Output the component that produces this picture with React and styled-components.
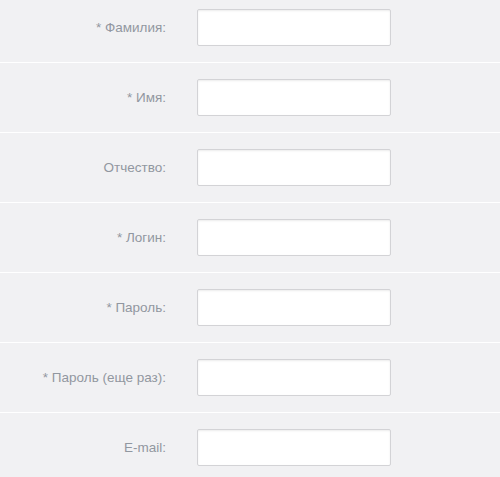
import React from 'react';
import styled, { createGlobalStyle } from 'styled-components';

const GlobalStyle = createGlobalStyle`
  html, body {
    margin: 0;
    padding: 0;
    background: #f1f1f3;
    overflow: hidden;
  }
`;

const fields = [
  { label: 'Фамилия', required: true, type: 'text' },
  { label: 'Имя', required: true, type: 'text' },
  { label: 'Отчество', required: false, type: 'text' },
  { label: 'Логин', required: true, type: 'text' },
  { label: 'Пароль', required: true, type: 'password' },
  { label: 'Пароль (еще раз)', required: true, type: 'password' },
  { label: 'E-mail', required: false, type: 'email' },
];

const App = () => {
  return (
    <>
      <GlobalStyle />
      <Form>
        {fields.map((f) => (
          <Row key={f.label}>
            <Label>
              {f.required ? '* ' : ''}
              {f.label}:
            </Label>
            <Input type={f.type} />
          </Row>
        ))}
      </Form>
    </>
  );
};

const Form = styled.form`
  margin-top: -8px;
  width: 500px;
  background: #f1f1f3;
  font-family: 'Liberation Sans', Arial, sans-serif;
`;

const Row = styled.div`
  display: grid;
  grid-template-columns: 166px 194px;
  column-gap: 31px;
  align-items: center;
  padding: 16px 0;
  border-top: 1px solid #ffffff;
`;

const Label = styled.label`
  text-align: right;
  font-size: 13.5px;
  color: #9197a0;
`;

const Input = styled.input`
  box-sizing: border-box;
  width: 194px;
  height: 37px;
  margin: 0;
  padding: 4px 8px;
  background: #ffffff;
  border: 1px solid #d3d3d6;
  border-radius: 2px;
  box-shadow: inset 0 1px 2px rgba(0, 0, 0, 0.08);
  font-family: 'Liberation Sans', Arial, sans-serif;
  font-size: 13px;
  outline: none;
`;

export default App;
